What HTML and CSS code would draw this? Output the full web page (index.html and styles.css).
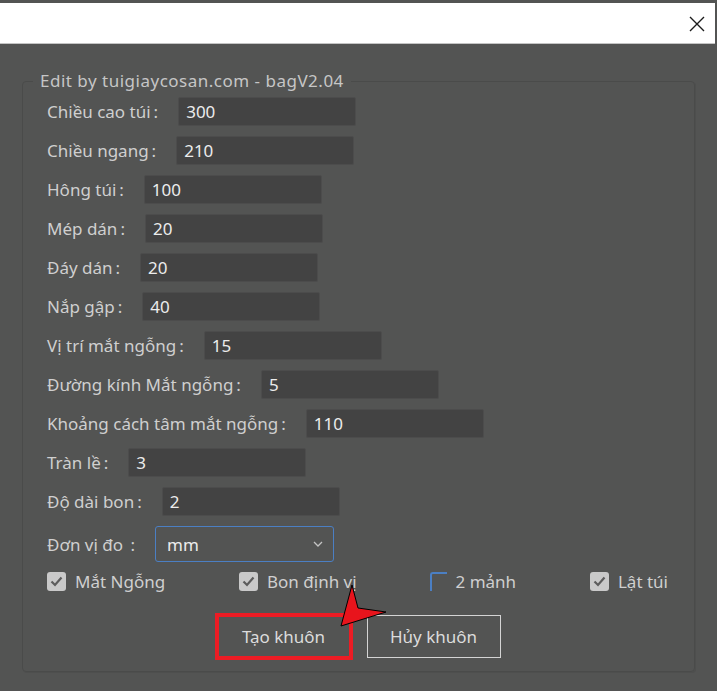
FILE: index.html
```html
<!DOCTYPE html>
<html>
<head>
    <title>bagV2.04</title>
    <meta charset="utf-8">
    <link rel="stylesheet" href="styles.css">
</head>
<body>
    <div class="titlebar">
        <span class="close">
            <svg width="16" height="16" viewBox="0 0 16 16"><path d="M1 1 L15 15 M15 1 L1 15" stroke="#1c1c1c" stroke-width="1.4" fill="none"/></svg>
        </span>
    </div>

    <div class="dialog">
        <fieldset class="panel">
            <legend>Edit by tuigiaycosan.com - bagV2.04</legend>
            <div class="fields">
                <div class="row"><label>Chiều cao túi<span class="colon">:</span></label><input class="field" type="text" value="300"></div>
                <div class="row"><label>Chiều ngang<span class="colon">:</span></label><input class="field" type="text" value="210"></div>
                <div class="row"><label>Hông túi<span class="colon">:</span></label><input class="field" type="text" value="100"></div>
                <div class="row"><label>Mép dán<span class="colon">:</span></label><input class="field" type="text" value="20"></div>
                <div class="row"><label>Đáy dán<span class="colon">:</span></label><input class="field" type="text" value="20"></div>
                <div class="row"><label>Nắp gập<span class="colon">:</span></label><input class="field" type="text" value="40"></div>
                <div class="row"><label>Vị trí mắt ngỗng<span class="colon">:</span></label><input class="field" type="text" value="15"></div>
                <div class="row"><label>Đường kính Mắt ngỗng<span class="colon">:</span></label><input class="field" type="text" value="5"></div>
                <div class="row"><label>Khoảng cách tâm mắt ngỗng<span class="colon">:</span></label><input class="field" type="text" value="110"></div>
                <div class="row"><label>Tràn lề<span class="colon">:</span></label><input class="field" type="text" value="3"></div>
                <div class="row"><label>Độ dài bon<span class="colon">:</span></label><input class="field" type="text" value="2"></div>
                <div class="row select-row">
                    <label>Đơn vị đo <span class="colon">:</span></label>
                    <div class="select">
                        <span>mm</span>
                        <svg width="10" height="6" viewBox="0 0 10 6"><path d="M1 1 L5 5 L9 1" stroke="#c4c4c4" stroke-width="1.3" fill="none"/></svg>
                    </div>
                </div>

                <div class="checks">
                    <div class="check"><span class="box on"><svg width="13" height="11" viewBox="0 0 13 11"><path d="M1.5 5.5 L5 9 L11.5 1.5" stroke="#5c5c5c" stroke-width="2.2" fill="none"/></svg></span>Mắt Ngỗng</div>
                    <div class="check"><span class="box on"><svg width="13" height="11" viewBox="0 0 13 11"><path d="M1.5 5.5 L5 9 L11.5 1.5" stroke="#5c5c5c" stroke-width="2.2" fill="none"/></svg></span>Bon định vị</div>
                    <div class="check"><span class="box off"></span>2 mảnh</div>
                    <div class="check"><span class="box on"><svg width="13" height="11" viewBox="0 0 13 11"><path d="M1.5 5.5 L5 9 L11.5 1.5" stroke="#5c5c5c" stroke-width="2.2" fill="none"/></svg></span>Lật túi</div>
                </div>

                <div class="actions">
                    <span class="highlight"><button class="btn">Tạo khuôn</button></span>
                    <button class="btn outline">Hủy khuôn</button>
                </div>
            </div>
        </fieldset>

        <!-- mũi tên chỉ vào nút -->
        <svg class="pointer" width="56" height="50" viewBox="0 0 56 50">
            <polygon points="17,5 23,28 51,32 6,46" fill="#e8141c" stroke="#000" stroke-width="1"/>
        </svg>
    </div>
</body>
</html>
```

FILE: styles.css
```css
body {
    margin: 0;
    background-color: #535453;
    font-family: "Noto Sans", "Open Sans", sans-serif;
    font-size: 17px;
    color: #cfcfcf;
    width: 717px;
    height: 691px;
    overflow: hidden;
}
.titlebar {
    margin-top: 3px;
    width: 715px;
    height: 40px;
    background-color: #ffffff;
    border-bottom: 1px solid #c4c4c4;
    display: flex;
    justify-content: flex-end;
    align-items: center;
}
.close {
    display: flex;
    margin-right: 10px;
    margin-top: 1px;
}
.dialog {
    position: relative;
    padding: 26px 0 0 22px;
}
.panel {
    margin: 0;
    padding: 0;
    width: 671px;
    height: 600px;
    border: 1px solid #4a4b4a;
    border-radius: 4px;
    box-shadow: 1px 1px 0 #4e4f4e;
}
.panel legend {
    margin-left: 10px;
    padding: 0 7px;
    line-height: 22px;
    letter-spacing: 0.5px;
    color: #c6c6c6;
}
.fields {
    padding: 5px 26px 0 24px;
}
.row {
    display: flex;
    align-items: center;
    height: 29px;
    margin-bottom: 10px;
}
.row label {
    margin-right: 20px;
    white-space: nowrap;
}
.colon {
    margin-left: 3px;
}
.field {
    width: 178px;
    height: 29px;
    box-sizing: border-box;
    padding: 0 7px;
    background-color: #434343;
    border: 1px solid #4c4c4c;
    border-radius: 2px;
    color: #ececec;
    font-family: "Noto Sans", "Open Sans", sans-serif;
    font-size: 17px;
    outline: none;
}
.select-row {
    height: 36px;
}
.select {
    width: 179px;
    height: 36px;
    box-sizing: border-box;
    padding: 0 10px 0 11px;
    border: 1.5px solid #4b7fc3;
    border-radius: 3px;
    display: flex;
    align-items: center;
    justify-content: space-between;
    color: #ececec;
}
.checks {
    display: flex;
    justify-content: space-between;
    align-items: center;
    margin-top: 9px;
    height: 19px;
}
.check {
    display: flex;
    align-items: center;
    white-space: nowrap;
}
.box {
    width: 19px;
    height: 19px;
    box-sizing: border-box;
    border-radius: 3px;
    margin-right: 9px;
    display: flex;
    align-items: center;
    justify-content: center;
}
.box.on {
    background-color: #c9c9c9;
}
.box.off {
    width: 17px;
    border-top: 2px solid #4b7fc3;
    border-left: 2px solid #4b7fc3;
    border-radius: 3px 0 0 0;
    margin-right: 8px;
}
.actions {
    display: flex;
    justify-content: center;
    align-items: center;
    gap: 14px;
    margin-top: 22px;
}
.highlight {
    display: flex;
    border: 4px solid #ec1c24;
}
.btn {
    background: transparent;
    border: none;
    color: #dcdcdc;
    font-family: "Noto Sans", "Open Sans", sans-serif;
    font-size: 17px;
    width: 130px;
    height: 39px;
    padding: 0;
}
.btn.outline {
    width: 134px;
    height: 43px;
    border: 1.5px solid #d4d4d4;
}
.pointer {
    position: absolute;
    left: 335px;
    top: 536px;
}
```
